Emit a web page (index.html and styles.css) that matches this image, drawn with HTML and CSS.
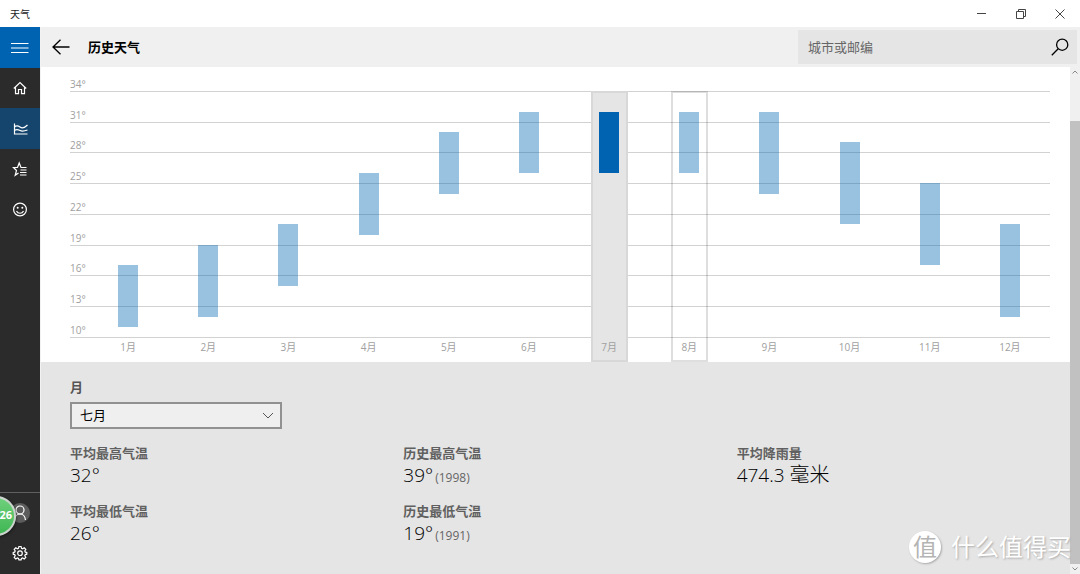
FILE: index.html
```html
<!DOCTYPE html>
<html lang="zh-CN">
<head>
<meta charset="utf-8">
<title>天气</title>
<link rel="stylesheet" href="styles.css">
</head>
<body>
<div class="window">
  <header class="titlebar">
    <span class="app-name">天气</span>
    <div class="window-controls">
      <button type="button" aria-label="最小化"><svg width="10" height="10" viewBox="0 0 10 10"><path d="M0 4.500h9"/></svg></button>
      <button type="button" aria-label="还原"><svg width="10" height="10" viewBox="0 0 10 10"><path d="M.5 2.500h7v7h-7zM2.500 2.500v-2h7v7h-2"/></svg></button>
      <button type="button" aria-label="关闭"><svg width="10" height="10" viewBox="0 0 10 10"><path d="M.5.5l9 9M9.500.5l-9 9"/></svg></button>
    </div>
  </header>
  <div class="shell">
    <nav class="rail">
      <button type="button" class="rail-item menu" aria-label="菜单"><svg width="18" height="12" viewBox="0 0 18 12"><path d="M0 1.500h17.500M0 6h17.500M0 10.500h17.500"/></svg></button>
      <button type="button" class="rail-item" aria-label="主页"><svg width="14" height="14" viewBox="0 0 14 14"><path d="M.8 7.500L7 1.500l6.200 6M2.500 6.500v6.200h3V8.500h3v4.200h3V6.500"/></svg></button>
      <button type="button" class="rail-item current" aria-label="历史天气"><svg width="15" height="14" viewBox="0 0 15 14"><path d="M1.500 1.500v10.500H14.500M1.500 5c2-2 3.500-1.500 5.500 0s4 1.500 7.500-2M1.500 8.500c2-1.500 3.500-1 5.500 0s4 .8 7.500-.5"/></svg></button>
      <button type="button" class="rail-item" aria-label="收藏"><svg width="16" height="16" viewBox="0 0 16 16"><path d="M14.500 6.500H9L7.200 2 5.500 6.500H1.500l3 3-1.300 4.800 3.300-2.300M8.500 9h6M8 11.500h6.500M8 14h6.500"/></svg></button>
      <button type="button" class="rail-item" aria-label="反馈"><svg width="16" height="16" viewBox="0 0 16 16"><circle cx="8" cy="8.500" r="6.400"/><path d="M4.500 10c1.500 3 5.500 3 7 0"/><g class="dot"><circle cx="5.700" cy="6.700" r="1"/><circle cx="10.300" cy="6.700" r="1"/></g></svg></button>
      <div class="rail-footer">
        <button type="button" class="rail-item" aria-label="账户"><span class="avatar"><svg width="16" height="18" viewBox="0 0 16 18"><circle cx="8" cy="6" r="4"/><path d="M2.500 16c.5-4 3-6 5.500-6s5 2 5.500 6"/></svg></span></button>
        <button type="button" class="rail-item" aria-label="设置"><svg width="16" height="16" viewBox="0 0 16 16"><path d="M6.900 1.500h2.200l.4 1.800 1.100.5 1.600-1 1.600 1.600-1 1.600.5 1.100 1.500.3v1.800l-1.500.4-.5 1.100 1 1.600-1.600 1.600-1.600-1-1.100.5-.4 1.500H6.900l-.4-1.500-1.100-.5-1.600 1-1.600-1.600 1-1.600-.5-1.100-1.500-.4V7.400l1.500-.3.5-1.100-1-1.600 1.600-1.600 1.600 1 1.100-.5z"/><circle cx="8" cy="8.200" r="2.300"/></svg></button>
      </div>
    </nav>
    <div class="page">
      <header class="page-header">
        <button type="button" class="back" aria-label="返回"><svg width="18" height="16" viewBox="0 0 18 16"><path d="M1 8h16.500M8.500.8L1 8l7.500 7.200"/></svg></button>
        <h1>历史天气</h1>
        <form class="search">
          <input type="text" placeholder="城市或邮编" aria-label="城市或邮编">
          <button type="button" aria-label="搜索"><svg width="18" height="18" viewBox="0 0 18 18"><circle cx="11.200" cy="6.700" r="5.600"/><path d="M7.200 10.700L.8 17.200"/></svg></button>
        </form>
      </header>
      <div class="scroll-area">
        <main class="content">
          <section class="chart">
            <div class="scale">
              <span>34°</span><span>31°</span><span>28°</span><span>25°</span><span>22°</span><span>19°</span><span>16°</span><span>13°</span><span>10°</span>
            </div>
            <div class="months">
              <button type="button" class="month"><span class="range"><i style="grid-row:18/24"></i></span>1月</button>
              <button type="button" class="month"><span class="range"><i style="grid-row:16/23"></i></span>2月</button>
              <button type="button" class="month"><span class="range"><i style="grid-row:14/20"></i></span>3月</button>
              <button type="button" class="month"><span class="range"><i style="grid-row:9/15"></i></span>4月</button>
              <button type="button" class="month"><span class="range"><i style="grid-row:5/11"></i></span>5月</button>
              <button type="button" class="month"><span class="range"><i style="grid-row:3/9"></i></span>6月</button>
              <button type="button" class="month selected"><span class="range"><i style="grid-row:3/9"></i></span>7月</button>
              <button type="button" class="month hovered"><span class="range"><i style="grid-row:3/9"></i></span>8月</button>
              <button type="button" class="month"><span class="range"><i style="grid-row:3/11"></i></span>9月</button>
              <button type="button" class="month"><span class="range"><i style="grid-row:6/14"></i></span>10月</button>
              <button type="button" class="month"><span class="range"><i style="grid-row:10/18"></i></span>11月</button>
              <button type="button" class="month"><span class="range"><i style="grid-row:14/23"></i></span>12月</button>
            </div>
          </section>
          <section class="details">
            <label for="month">月</label>
            <div class="picker">
              <select id="month"><option>七月</option></select>
              <svg width="12" height="7" viewBox="0 0 12 7"><path d="M1 1l5 5 5-5"/></svg>
            </div>
            <dl class="stats">
              <div><dt>平均最高气温</dt><dd>32°</dd></div>
              <div><dt>历史最高气温</dt><dd>39°<small>(1998)</small></dd></div>
              <div><dt>平均降雨量</dt><dd>474.3 <span class="unit">毫米</span></dd></div>
              <div><dt>平均最低气温</dt><dd>26°</dd></div>
              <div><dt>历史最低气温</dt><dd>19°<small>(1991)</small></dd></div>
            </dl>
          </section>
        </main>
        <div class="scrollbar">
          <svg width="10" height="10" viewBox="0 0 10 10"><path d="M2.500 6.500L5 4l2.500 2.500"/></svg>
          <div class="thumb"></div>
          <svg width="10" height="10" viewBox="0 0 10 10"><path d="M2.500 3.500L5 6l2.500-2.500"/></svg>
        </div>
      </div>
    </div>
  </div>
  <div class="float-ball">26</div>
  <div class="watermark"><span class="seal">值</span><span>什么值得买</span></div>
</div>
</body>
</html>
```

FILE: styles.css
```css
* { box-sizing: border-box; }

body {
  margin: 0;
  font-family: "Open Sans", "Noto Sans CJK SC", sans-serif;
  font-size: 13px;
  color: #000;
  background: #fff;
}

button, input, select { font: inherit; color: inherit; }
button { padding: 0; border: 0; background: none; }
svg { display: block; fill: none; stroke: currentColor; }

.window {
  position: relative;
  display: flex;
  flex-direction: column;
  min-height: 100vh;
  overflow: hidden;
}

.titlebar {
  display: flex;
  align-items: center;
  justify-content: space-between;
  height: 27px;
  padding: 0 1px 0 10px;
}
.app-name { font-size: 10px; color: #222; }
.window-controls { display: flex; color: #444; }
.window-controls button {
  display: grid;
  place-items: center;
  width: 39px;
  height: 27px;
}

.shell { display: flex; flex: 1; }

.rail {
  display: flex;
  flex-direction: column;
  flex: none;
  width: 40px;
  background: #2b2b2b;
  color: #fff;
}
.rail svg { stroke-width: 1.2; }
.rail-item {
  display: grid;
  place-items: center;
  width: 40px;
  height: 40px;
}
.menu { height: 41px; background: #0063b1; }
.current { height: 41px; background: #15446d; }
.dot { fill: currentColor; stroke: none; }
.rail-footer {
  margin-top: auto;
  padding-bottom: 1px;
  border-top: 1px solid #606060;
}
.avatar {
  display: grid;
  place-items: center;
  width: 20px;
  height: 20px;
  border-radius: 50%;
  background: #5c5c5c;
}

.page {
  display: flex;
  flex-direction: column;
  flex: 1;
  min-width: 0;
  border-left: 1px solid #f2f2f2;
}
.page-header {
  display: flex;
  align-items: center;
  height: 40px;
  padding: 0 3px 0 11px;
  background: #f0f0f0;
}
.page-header svg { stroke-width: 1.3; }
.page-header h1 {
  margin: 0 auto 0 18px;
  padding-bottom: 2px;
  font-size: 13px;
  font-weight: 700;
}
.search {
  display: flex;
  align-items: center;
  width: 279px;
  height: 34px;
  padding: 0 8px 0 10px;
  background: #e5e5e5;
}
.search input {
  flex: 1;
  min-width: 0;
  padding: 0;
  border: 0;
  outline: 0;
  background: none;
}
.search input::placeholder { color: #666; opacity: 1; }

.scroll-area { display: flex; flex: 1; }
.content {
  display: flex;
  flex-direction: column;
  flex: 1;
  min-width: 0;
}

.chart {
  position: relative;
  margin: 0 20px 0 29px;
  padding: 24px 0 0 18px;
  font-size: 10px;
  color: #a0a0a0;
}
/* Temperature lines run behind the month columns. */
.scale {
  position: absolute;
  top: -6px;
  left: 0;
  right: 0;
  display: grid;
  grid-auto-rows: 1fr;
  height: 277px;
}
.scale span {
  display: flex;
  align-items: flex-end;
  border-bottom: 1px solid #d2d2d2;
  line-height: 14px;
}
.months {
  position: relative;
  display: grid;
  grid-template-columns: repeat(12, 1fr);
  justify-items: center;
}
.month {
  display: flex;
  flex-direction: column;
  align-items: center;
  width: 37px;
  height: 271px;
  line-height: 20px;
}
.range {
  display: grid;
  grid-template-rows: repeat(24, 1fr);
  flex: none;
  width: 20px;
  height: 246px;
}
.range i { background: #0063b1; opacity: .4; }
.selected {
  background: #e5e5e5;
  box-shadow: inset 0 0 0 2px #d8d8d8;
}
.selected .range i { opacity: 1; }
.hovered { box-shadow: inset 0 0 0 2px rgba(0, 0, 0, .13); }

.details {
  flex: 1;
  padding: 15px 0 16px 29px;
  background: #e5e5e5;
}
.details label {
  display: block;
  line-height: 20px;
  font-weight: 700;
  color: #555;
}
.picker {
  display: flex;
  align-items: center;
  width: 212px;
  margin: 5px 0 14px;
}
.picker select {
  flex: 1;
  height: 27px;
  padding: 0 8px 2px;
  border: 2px solid #919191;
  border-radius: 0;
  background: #efefef;
  appearance: none;
}
.picker svg { margin: 0 8px 0 -20px; color: #555; pointer-events: none; }

.stats {
  display: grid;
  grid-template-columns: repeat(3, 1fr);
  row-gap: 14px;
  margin: 0;
}
.stats dt {
  line-height: 20px;
  font-weight: 700;
  color: #606060;
}
.stats dd {
  margin: 0;
  height: 24px;
  line-height: 24px;
  font-size: 19px;
  font-weight: 300;
}
.stats small {
  margin-left: 2px;
  font-size: 12px;
  font-weight: 400;
  color: #666;
}
.unit { font-size: 20px; }

.scrollbar {
  display: flex;
  flex-direction: column;
  width: 10px;
  background: #f0f0f0;
  color: #888;
}
.thumb {
  flex: 1;
  margin-top: 44px;
  background: #c1c1c1;
}

.float-ball {
  position: absolute;
  left: -24px;
  bottom: 38px;
  width: 40px;
  height: 40px;
  padding-right: 2px;
  border: 2px solid #c9d3cb;
  border-radius: 50%;
  background: linear-gradient(#6fd07c, #3fb653);
  box-shadow: 0 1px 3px #111;
  color: #fff;
  font-size: 11px;
  font-weight: 700;
  line-height: 34px;
  text-align: right;
}

.watermark {
  position: absolute;
  right: 9px;
  bottom: 11px;
  display: flex;
  align-items: center;
  gap: 10px;
  color: #fff;
  font-size: 24px;
  line-height: 32px;
  text-shadow: 1px 1px 2px #aaa;
  pointer-events: none;
}
.seal {
  width: 32px;
  height: 32px;
  border-radius: 50%;
  background: #fff;
  box-shadow: 1px 1px 2px #aaa;
  color: #b4b4b4;
  text-align: center;
  text-shadow: none;
}
```
